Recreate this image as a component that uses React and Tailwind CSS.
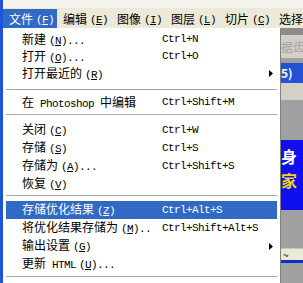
import React from 'react';

const cjk = '"Noto Sans CJK SC", "Liberation Sans", sans-serif';

// Latin part of a label, mono and narrow like SimSun half-width glyphs
const Lat = ({ children }) => (
  <span className="font-['Liberation_Mono',monospace] text-[11px] tracking-[-0.6px]">{children}</span>
);

// "(X)" with the key underlined
const Key = ({ k }) => (
  <span className="ml-[3px]">
    <Lat>
      (<span className="underline underline-offset-1">{k}</span>)
    </Lat>
  </span>
);

const Arrow = () => (
  <svg width="4" height="7" viewBox="0 0 4 7" className="ml-auto mr-[4px]">
    <path d="M0 0L4 3.5L0 7Z" fill="currentColor" />
  </svg>
);

const Row = ({ label, shortcut, arrow, active, tall }) => (
  <div
    className={`mx-[3px] flex items-center pl-[16px] whitespace-nowrap ${tall ? 'h-[18px]' : 'h-[17px]'} ${
      active ? 'bg-[#316ac5] text-white' : 'text-black'
    }`}
  >
    <div className="w-[140px] shrink-0 text-[12px] leading-none">{label}</div>
    {shortcut && <Lat>{shortcut}</Lat>}
    {arrow && <Arrow />}
  </div>
);

const Sep = ({ top, bottom }) => (
  <div className={`mx-[3px] ${top} ${bottom}`}>
    <div className="h-px bg-[#a7a6aa]" />
  </div>
);

const menus = [
  ['文件', 'F'],
  ['编辑', 'E'],
  ['图像', 'I'],
  ['图层', 'L'],
  ['切片', 'C'],
];

export default function App() {
  return (
    <div className="w-[303px] h-[283px] overflow-hidden flex bg-[#a0a0a0]" style={{ fontFamily: cjk }}>
      <div className="w-[3px] shrink-0 bg-[#1d55d6]" />
      <div className="flex-1 flex flex-col min-w-0">
        <div className="h-[8px] bg-[#f4f3ee]" />
        {/* menu bar */}
        <div className="h-[20px] pt-[1px] bg-[#ece9d8] flex whitespace-nowrap">
          {menus.map(([t, k], i) => (
            <div
              key={t}
              className={`w-[54px] shrink-0 h-[19px] flex items-center pl-[6px] text-[12px] ${
                i === 0 ? 'bg-[#316ac5] text-white' : 'text-black'
              }`}
            >
              {t}
              <Key k={k} />
            </div>
          ))}
          <div className="h-[19px] flex items-center pl-[6px] text-[12px] text-black">选择</div>
        </div>

        <div className="flex-1 flex min-h-0">
          {/* dropdown */}
          <div className="w-[278px] shrink-0 bg-white border-r border-[#808080] pt-[3px] flex flex-col">
            <Row label={<>新建<Key k="N" /><Lat>...</Lat></>} shortcut="Ctrl+N" />
            <Row label={<>打开<Key k="O" /><Lat>...</Lat></>} shortcut="Ctrl+O" />
            <Row label={<>打开最近的<Key k="R" /></>} arrow />
            <Sep top="pt-[7px]" bottom="pb-[4px]" />
            <Row label={<>在<Lat> Photoshop </Lat>中编辑</>} shortcut="Ctrl+Shift+M" />
            <Sep top="pt-[3px]" bottom="pb-[6px]" />
            <Row tall label={<>关闭<Key k="C" /></>} shortcut="Ctrl+W" />
            <Row tall label={<>存储<Key k="S" /></>} shortcut="Ctrl+S" />
            <Row tall label={<>存储为<Key k="A" /><Lat>...</Lat></>} shortcut="Ctrl+Shift+S" />
            <Row tall label={<>恢复<Key k="V" /></>} />
            <Sep top="pt-[2px]" bottom="pb-[5px]" />
            <Row tall active label={<>存储优化结果<Key k="Z" /></>} shortcut="Ctrl+Alt+S" />
            <Row tall label={<>将优化结果存储为<Key k="M" /><Lat>..</Lat></>} shortcut="Ctrl+Shift+Alt+S" />
            <Row tall label={<>输出设置<Key k="G" /></>} arrow />
            <Row tall label={<>更新<Lat> HTML</Lat><Key k="U" /><Lat>...</Lat></>} />
            <Sep top="pt-[3px]" bottom="pb-[4px]" />
          </div>

          {/* window content behind the menu */}
          <div className="flex-1 flex flex-col overflow-hidden whitespace-nowrap">
            <div className="h-[7px] bg-[#8c8c8c]" />
            <div className="h-[23px] bg-[#d4d0c8] text-[12px] text-[#a0a0a0] flex items-center">据齿</div>
            <div className="h-[5px] bg-[#a0a0a0]" />
            <div className="h-[20px] bg-[#2350d4] text-white font-bold text-[12px] flex items-center">5)</div>
            <div className="h-[17px] bg-[#d4d0c8]" />
            <div className="h-[40px] bg-[#a0a0a0]" />
            <div className="h-[70px] bg-[#1010ee] flex flex-col font-bold text-[16px] leading-none pt-[8px] gap-[8px]">
              <span className="text-white">身</span>
              <span className="text-[#f0d020]">家</span>
            </div>
            <div className="h-[38px] bg-[#a0a0a0]" />
            <div className="h-[12px] bg-[#ece9d8] border-t border-[#c8c4b8] text-[10px] leading-none flex items-center pl-[2px]">~</div>
            <div className="h-[3px] bg-[#0a30c0]" />
            <div className="flex-1 bg-[#a0a0a0]" />
          </div>
        </div>
      </div>
    </div>
  );
}
